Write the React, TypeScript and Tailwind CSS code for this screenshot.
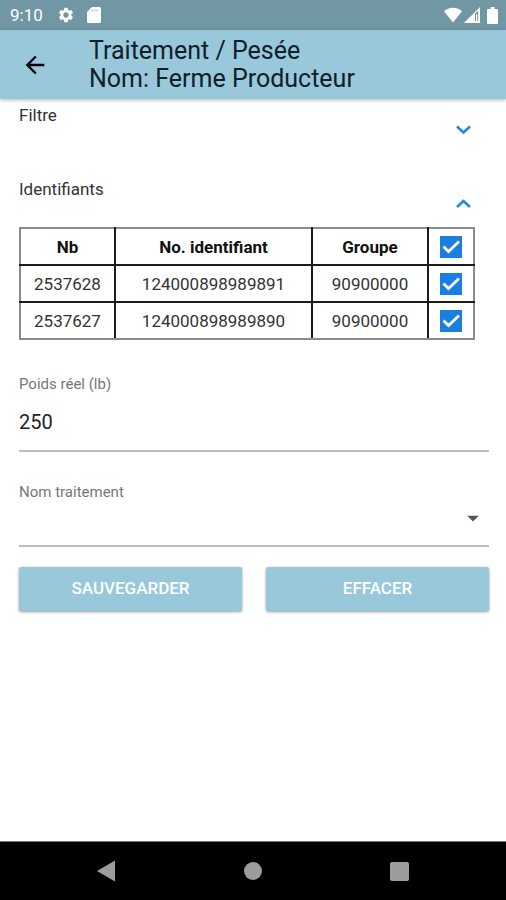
import React, { useState } from 'react';
import { MdArrowBack, MdArrowDropDown, MdSettings } from 'react-icons/md';

interface Animal {
  nb: string;
  identifiant: string;
  groupe: string;
}

const ANIMALS: Animal[] = [
  { nb: '2537628', identifiant: '124000898989891', groupe: '90900000' },
  { nb: '2537627', identifiant: '124000898989890', groupe: '90900000' },
];

const StatusBar = () => (
  <div className="flex h-[30px] items-center bg-[#7297a4] px-2 pl-[10px] text-white">
    <span className="text-[17px] leading-5">9:10</span>
    <MdSettings className="ml-[14px] size-[18px]" />
    <svg viewBox="0 0 14 16" className="ml-3 h-4 w-[14px]" fill="currentColor">
      <path d="M5 0h7.500a1.500 1.500 0 0 1 1.500 1.500v13a1.500 1.500 0 0 1-1.500 1.500h-11A1.500 1.500 0 0 1 0 14.500V5z" />
      <path d="M4.500 3.500h7" stroke="#7297a4" strokeOpacity=".5" strokeWidth="2" strokeDasharray="1.500 1" />
    </svg>
    <div className="ml-auto flex items-center">
      <svg viewBox="0 0 18 16" className="h-4 w-[18px]" fill="currentColor">
        <path d="M9 15.500 0 4.300C2.500 1.900 5.600.700 9 .700s6.500 1.200 9 3.600z" />
      </svg>
      <svg viewBox="0 0 16 16" className="ml-[2px] size-4" fill="currentColor">
        <path fillRule="evenodd" d="M16 0v16H0zM11 6.500v7.500h3.200V3.800z" />
        <path d="M12 7h1.200v7H12z" />
      </svg>
      <svg viewBox="0 0 11 17" className="ml-[7px] h-[17px] w-[11px]" fill="currentColor">
        <path d="M3.500 0h4v2H10a1 1 0 0 1 1 1v13a1 1 0 0 1-1 1H1a1 1 0 0 1-1-1V3a1 1 0 0 1 1-1h2.500z" />
      </svg>
    </div>
  </div>
);

const Header = () => (
  <header className="relative flex h-[69px] items-center bg-[#98c8da] pl-[21px] shadow-[0_1px_4px_rgba(0,0,0,0.3)]">
    <button type="button" aria-label="Retour" className="text-black">
      <MdArrowBack className="size-7" />
    </button>
    <h1 className="ml-10 text-[25px] leading-7 text-[#10202a]">
      Traitement / Pesée
      <br />
      Nom: Ferme Producteur
    </h1>
  </header>
);

interface SectionToggleProps {
  label: string;
  open: boolean;
  onToggle: () => void;
}

const SectionToggle: React.FC<SectionToggleProps> = ({ label, open, onToggle }) => (
  <button
    type="button"
    aria-expanded={open}
    onClick={onToggle}
    className="flex w-full items-start justify-between pr-[14px] text-left"
  >
    <span className="text-[17px] leading-6 text-[#333]">{label}</span>
    <span className="pt-3.5 text-[#1e88e5]">
      <svg viewBox="0 0 24 24" className="size-6" fill="none" stroke="currentColor" strokeWidth="2.500">
        <path d={open ? 'm6 16 6.500-6L19 16' : 'm6 9.500 6.500 6L19 9.500'} />
      </svg>
    </span>
  </button>
);

interface CheckProps {
  label: string;
  checked: boolean;
  onChange: () => void;
}

const Check: React.FC<CheckProps> = ({ label, checked, onChange }) => (
  <label className="relative mx-auto block size-[22px]">
    <input
      type="checkbox"
      aria-label={label}
      checked={checked}
      onChange={onChange}
      className="peer block size-[22px] appearance-none border-2 border-[#1a7fe0] checked:bg-[#1a7fe0]"
    />
    <svg
      viewBox="0 0 22 22"
      className="pointer-events-none absolute inset-0 hidden size-[22px] peer-checked:block"
      fill="none"
      stroke="white"
      strokeWidth="2.800"
    >
      <path d="m3.500 10.500 5 5L19 5.500" />
    </svg>
  </label>
);

export default function App() {
  const [filterOpen, setFilterOpen] = useState(false);
  const [listOpen, setListOpen] = useState(true);
  const [selected, setSelected] = useState<string[]>(ANIMALS.map(a => a.nb));
  const [weight, setWeight] = useState('250');
  const [treatment, setTreatment] = useState('');

  const allSelected = selected.length === ANIMALS.length;

  const toggle = (nb: string) => {
    setSelected(selected.includes(nb) ? selected.filter(s => s !== nb) : [...selected, nb]);
  };

  const clear = () => {
    setSelected([]);
    setWeight('');
    setTreatment('');
  };

  // black rules inside the table, grey ones round it
  const cell =
    'h-[37px] border-2 border-[#1c1c1c] p-0 text-center first:border-l-[#8c8c8c] last:border-r-[#8c8c8c]';
  const headCell = `${cell} border-t-[#8c8c8c]`;
  const bodyCell = `${cell} group-last:border-b-[#8c8c8c]`;

  return (
    <div className="flex min-h-screen flex-col bg-white font-[Roboto,sans-serif]">
      <StatusBar />
      <Header />

      <main className="flex-1 pt-1 pr-[17px] pl-[19px]">
        <div className="flex flex-col gap-9">
          <SectionToggle label="Filtre" open={filterOpen} onToggle={() => setFilterOpen(!filterOpen)} />
          <SectionToggle label="Identifiants" open={listOpen} onToggle={() => setListOpen(!listOpen)} />
        </div>

        {listOpen && (
          <div className="mt-3 pr-[14px]">
            <table className="w-full table-fixed border-collapse text-[17px] leading-5 text-[#333]">
              <thead className="text-[#111]">
                <tr>
                  <th className={`${headCell} w-[95px]`}>Nb</th>
                  <th className={headCell}>No. identifiant</th>
                  <th className={`${headCell} w-[116px]`}>Groupe</th>
                  <th className={`${headCell} w-[46px]`}>
                    <Check
                      label="Tout sélectionner"
                      checked={allSelected}
                      onChange={() => setSelected(allSelected ? [] : ANIMALS.map(a => a.nb))}
                    />
                  </th>
                </tr>
              </thead>
              <tbody>
                {ANIMALS.map(a => (
                  <tr key={a.nb} className="group">
                    <td className={bodyCell}>{a.nb}</td>
                    <td className={bodyCell}>{a.identifiant}</td>
                    <td className={bodyCell}>{a.groupe}</td>
                    <td className={bodyCell}>
                      <Check
                        label={`Sélectionner ${a.nb}`}
                        checked={selected.includes(a.nb)}
                        onChange={() => toggle(a.nb)}
                      />
                    </td>
                  </tr>
                ))}
              </tbody>
            </table>
          </div>
        )}

        {/* Weight */}
        <div className="mt-[34px]">
          <label htmlFor="poids" className="block text-[15px] leading-5 text-[#777]">
            Poids réel (lb)
          </label>
          <input
            id="poids"
            inputMode="decimal"
            value={weight}
            onChange={e => setWeight(e.target.value)}
            className="block h-[58px] w-full border-b-2 border-[#bdbdbd] text-[20px] text-[#222] outline-none"
          />
        </div>

        {/* Treatment */}
        <div className="mt-[30px]">
          <label htmlFor="traitement" className="block text-[15px] leading-5 text-[#777]">
            Nom traitement
          </label>
          <div className="relative">
            <select
              id="traitement"
              value={treatment}
              onChange={e => setTreatment(e.target.value)}
              className="block h-[45px] w-full appearance-none border-b-2 border-[#bdbdbd] text-[20px] text-[#222] outline-none"
            >
              <option value=""></option>
            </select>
            <MdArrowDropDown className="pointer-events-none absolute top-0.5 right-0.5 size-7 text-[#555]" />
          </div>
        </div>

        <div className="mt-5 grid grid-cols-2 gap-6 text-[17px] font-medium text-white">
          <button type="submit" className="h-11 rounded-xs bg-[#98c8da] shadow-[0_1px_3px_rgba(0,0,0,0.4)]">
            SAUVEGARDER
          </button>
          <button
            type="button"
            onClick={clear}
            className="h-11 rounded-xs bg-[#98c8da] shadow-[0_1px_3px_rgba(0,0,0,0.4)]"
          >
            EFFACER
          </button>
        </div>
      </main>

      {/* Android navigation */}
      <nav className="flex h-[59px] items-center justify-around border-t border-[#777] bg-black px-[33px] text-[#9c9c9c]">
        <button type="button" aria-label="Précédent">
          <svg viewBox="0 0 20 22" className="h-[22px] w-5" fill="currentColor">
            <path d="M18 .500v21L0 11z" />
          </svg>
        </button>
        <button type="button" aria-label="Accueil" className="size-[18px] rounded-full bg-[#9c9c9c]" />
        <button type="button" aria-label="Applications" className="size-[19px] rounded-xs bg-[#9c9c9c]" />
      </nav>
    </div>
  );
}
